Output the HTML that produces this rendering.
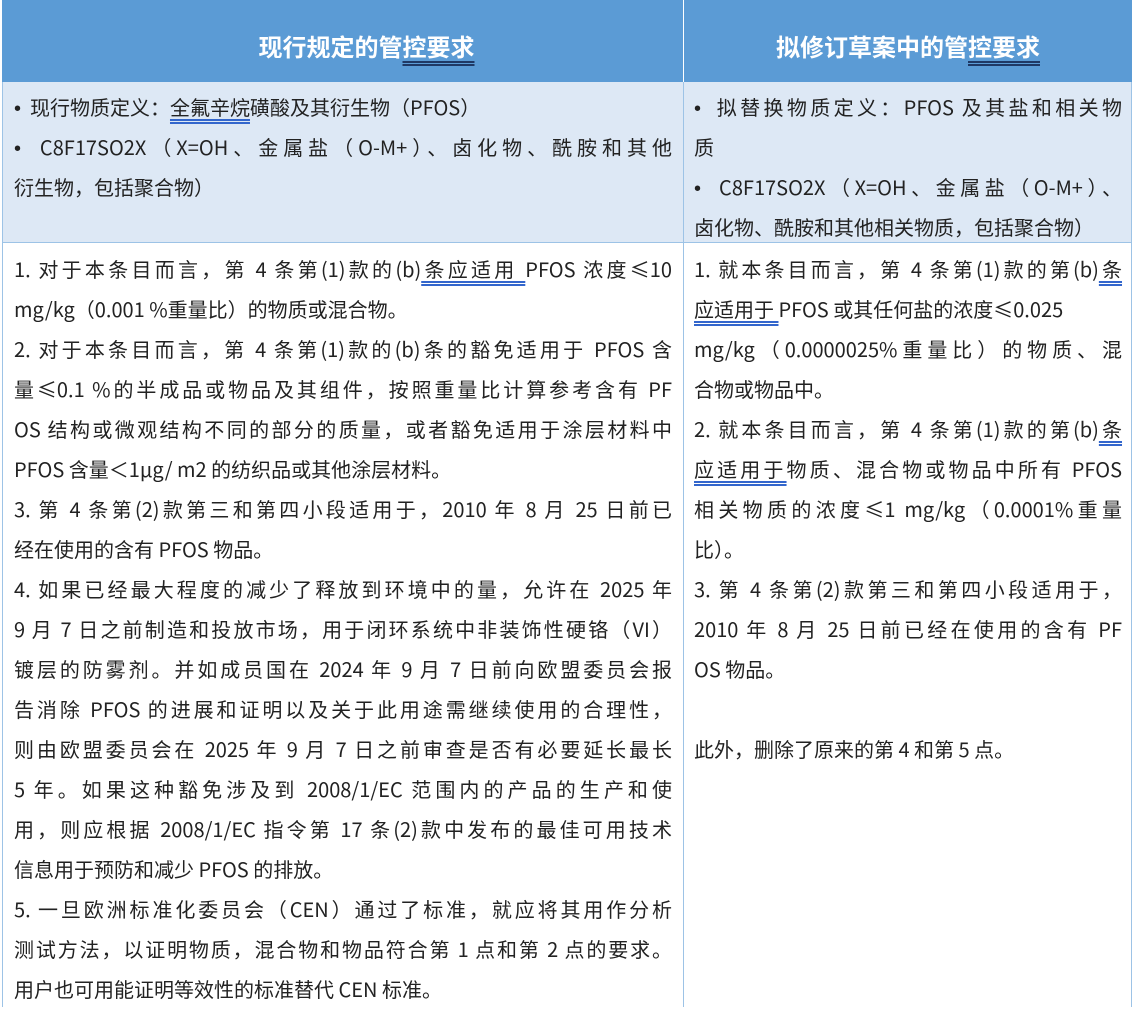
<!DOCTYPE html>
<html><head><meta charset="utf-8"><style>
*{margin:0;padding:0;box-sizing:border-box}
body{width:1134px;height:1007px;background:#fff;font-family:"Noto Sans CJK SC","Liberation Sans",sans-serif;color:#222;overflow:hidden;position:relative}
.abs{position:absolute}
.hd{top:0;height:82px;background:#5b9bd5;color:#fff;font-weight:bold;font-size:24px;line-height:92px;text-align:center}
.lb{top:82px;height:161px;background:#dde8f5}
.vl{position:absolute;width:1px;background:#9dc3e6}
.hl{position:absolute;height:1px;background:#9dc3e6}
.col{position:absolute;font-size:20px;}
.col div{height:40px;line-height:40px;white-space:nowrap;text-align:justify;text-align-last:justify}
.col div.l{text-align-last:left}
.b{font-family:"Liberation Sans",sans-serif;font-size:20px}
u{text-decoration:underline double #3366cc;text-underline-offset:4px}
.hu{text-decoration:underline double #1f3864;text-underline-offset:5px}
</style></head><body>
<div class="abs hd" style="left:2px;width:681px;padding-left:48px">现行规定的管<span class="hu">控要求</span></div>
<div class="abs hd" style="left:684px;width:448px">拟修订草案中的管<span class="hu">控要求</span></div>
<div class="abs lb" style="left:2px;width:681px"></div>
<div class="abs lb" style="left:684px;width:448px"></div>
<div class="vl" style="left:2px;top:82px;height:925px"></div>
<div class="vl" style="left:683px;top:82px;height:925px"></div>
<div class="vl" style="left:1131px;top:82px;height:925px"></div>
<div class="hl" style="left:2px;top:242px;width:1130px"></div>

<div class="col" style="left:14px;top:87px;width:658px">
<div class="l"><span class="b">•</span>&nbsp; 现行物质定义：<u>全氟辛烷</u>磺酸及其衍生物（PFOS）</div>
<div><span class="b">•</span>&nbsp; C8F17SO2X（X=OH、金属盐（O-M+）、卤化物、酰胺和其他</div>
<div class="l">衍生物，包括聚合物）</div>
</div>
<div class="col" style="left:694px;top:87px;width:428px">
<div><span class="b">•</span>&nbsp; 拟替换物质定义：PFOS 及其盐和相关物</div>
<div class="l">质</div>
<div><span class="b">•</span>&nbsp; C8F17SO2X（X=OH、金属盐（O-M+）、</div>
<div class="l">卤化物、酰胺和其他相关物质，包括聚合物）</div>
</div>

<div class="col" style="left:14px;top:249px;width:658px">
<div>1. 对于本条目而言，第 4 条第(1)款的(b)<u>条应适用 </u>PFOS 浓度≤10</div>
<div class="l">mg/kg（0.001 %重量比）的物质或混合物。</div>
<div>2. 对于本条目而言，第 4 条第(1)款的(b)条的豁免适用于 PFOS 含</div>
<div>量≤0.1 %的半成品或物品及其组件，按照重量比计算参考含有 PF</div>
<div>OS 结构或微观结构不同的部分的质量，或者豁免适用于涂层材料中</div>
<div class="l">PFOS 含量＜1μg/ m2 的纺织品或其他涂层材料。</div>
<div>3. 第 4 条第(2)款第三和第四小段适用于，2010 年 8 月 25 日前已</div>
<div class="l">经在使用的含有 PFOS 物品。</div>
<div>4. 如果已经最大程度的减少了释放到环境中的量，允许在 2025 年</div>
<div>9 月 7 日之前制造和投放市场，用于闭环系统中非装饰性硬铬（VI）</div>
<div>镀层的防雾剂。并如成员国在 2024 年 9 月 7 日前向欧盟委员会报</div>
<div>告消除 PFOS 的进展和证明以及关于此用途需继续使用的合理性，</div>
<div>则由欧盟委员会在 2025 年 9 月 7 日之前审查是否有必要延长最长</div>
<div>5 年。如果这种豁免涉及到 2008/1/EC 范围内的产品的生产和使</div>
<div>用，则应根据 2008/1/EC 指令第 17 条(2)款中发布的最佳可用技术</div>
<div class="l">信息用于预防和减少 PFOS 的排放。</div>
<div>5. 一旦欧洲标准化委员会（CEN）通过了标准，就应将其用作分析</div>
<div>测试方法，以证明物质，混合物和物品符合第 1 点和第 2 点的要求。</div>
<div class="l">用户也可用能证明等效性的标准替代 CEN 标准。</div>
</div>

<div class="col" style="left:694px;top:249px;width:428px">
<div>1. 就本条目而言，第 4 条第(1)款的第(b)<u>条</u></div>
<div class="l"><u>应适用于 </u>PFOS 或其任何盐的浓度≤0.025</div>
<div>mg/kg（0.0000025%重量比）的物质、混</div>
<div class="l">合物或物品中。</div>
<div>2. 就本条目而言，第 4 条第(1)款的第(b)<u>条</u></div>
<div><u>应适用于</u>物质、混合物或物品中所有 PFOS</div>
<div>相关物质的浓度≤1 mg/kg（0.0001%重量</div>
<div class="l">比）。</div>
<div>3. 第 4 条第(2)款第三和第四小段适用于，</div>
<div>2010 年 8 月 25 日前已经在使用的含有 PF</div>
<div class="l">OS 物品。</div>
<div class="l"></div>
<div class="l">此外，删除了原来的第 4 和第 5 点。</div>
</div>
</body></html>
